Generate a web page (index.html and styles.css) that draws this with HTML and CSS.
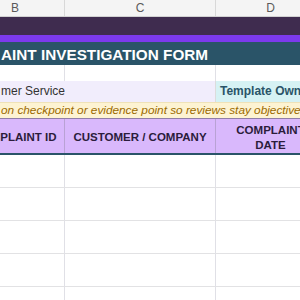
FILE: index.html
```html
<!DOCTYPE html>
<html lang="en">
<head>
  <meta charset="UTF-8" />
  <title>Complaint Investigation Form</title>
  <link rel="stylesheet" href="styles.css">
</head>
<body>

<div class="sheet">
  <div class="row col-head">
    <div class="cell">B</div>
    <div class="cell">C</div>
    <div class="cell">D</div>
  </div>

  <div class="band-dark"></div>
  <div class="band-accent"></div>
  <div class="title-row">AINT INVESTIGATION FORM</div>

  <div class="row blank-row">
    <div class="cell"></div>
    <div class="cell"></div>
    <div class="cell"></div>
  </div>

  <div class="row owner-row">
    <div class="cell merged">mer Service</div>
    <div class="cell owner">Template Owner</div>
  </div>

  <div class="note-row">on checkpoint or evidence point so reviews stay objective</div>

  <div class="row table-head">
    <div class="cell">COMPLAINT ID</div>
    <div class="cell">CUSTOMER / COMPANY</div>
    <div class="cell">COMPLAINT<br>DATE</div>
  </div>

  <div class="row data-row"><div class="cell"></div><div class="cell"></div><div class="cell"></div></div>
  <div class="row data-row"><div class="cell"></div><div class="cell"></div><div class="cell"></div></div>
  <div class="row data-row"><div class="cell"></div><div class="cell"></div><div class="cell"></div></div>
  <div class="row data-row"><div class="cell"></div><div class="cell"></div><div class="cell"></div></div>
  <div class="row data-row"><div class="cell"></div><div class="cell"></div><div class="cell"></div></div>
</div>

</body>
</html>
```

FILE: styles.css
```css
body {
  margin: 0;
  overflow: hidden;
  background: #fff;
  font-family: "Liberation Sans", Arial, sans-serif;
  color: #333;
}

/* sheet is scrolled: column A hidden, B partly off-screen */
.sheet {
  margin-left: -34px;
  width: 360px;
}

.row {
  display: grid;
  grid-template-columns: 99px 151px 110px;
}

.cell {
  box-sizing: border-box;
  border-right: 1px solid #e0e0e6;
  overflow: hidden;
  white-space: nowrap;
}

.col-head {
  height: 17px;
  background: #f4f4f4;
  border-bottom: 1px solid #d2d2d2;
  box-sizing: border-box;
}

.col-head .cell {
  text-align: center;
  font-size: 12px;
  line-height: 16px;
  color: #5a5a5a;
  border-right-color: #d8d8d8;
}

.band-dark {
  height: 18px;
  background: #3f2c4f;
}

.band-accent {
  height: 7px;
  background: #7c3aed;
}

.title-row {
  height: 23px;
  background: #2a5468;
  color: #fff;
  font-weight: bold;
  font-size: 15.3px;
  line-height: 25px;
  padding-left: 35px;
  white-space: nowrap;
}

.blank-row {
  height: 16px;
}

.owner-row {
  height: 21px;
  font-size: 12px;
  line-height: 21px;
}

.owner-row .merged {
  grid-column: span 2;
  background: #f1edfc;
  padding-left: 35px;
  color: #333;
  border-right-color: #dcdcdc;
}

.owner-row .owner {
  background: #d6f2f4;
  color: #2a5468;
  font-weight: bold;
  padding-left: 4px;
}

.note-row {
  box-sizing: border-box;
  height: 16px;
  background: #fdf3d2;
  border-top: 1px solid #efe2b8;
  color: #9c6a00;
  font-style: italic;
  font-size: 11.8px;
  line-height: 15px;
  padding-left: 35px;
  white-space: nowrap;
}

.table-head {
  box-sizing: border-box;
  height: 37px;
  background: #d9b8fc;
  border-top: 1px solid #8f7fa6;
  border-bottom: 2px solid #2a5468;
}

.table-head .cell {
  display: flex;
  align-items: center;
  justify-content: center;
  text-align: center;
  padding-top: 3px;
  font-size: 11.5px;
  line-height: 15px;
  font-weight: bold;
  color: #2b1c3b;
  border-right-color: #b9a2d4;
}

.data-row {
  height: 33px;
}

.data-row .cell {
  border-bottom: 1px solid #e2e2e4;
}
```
